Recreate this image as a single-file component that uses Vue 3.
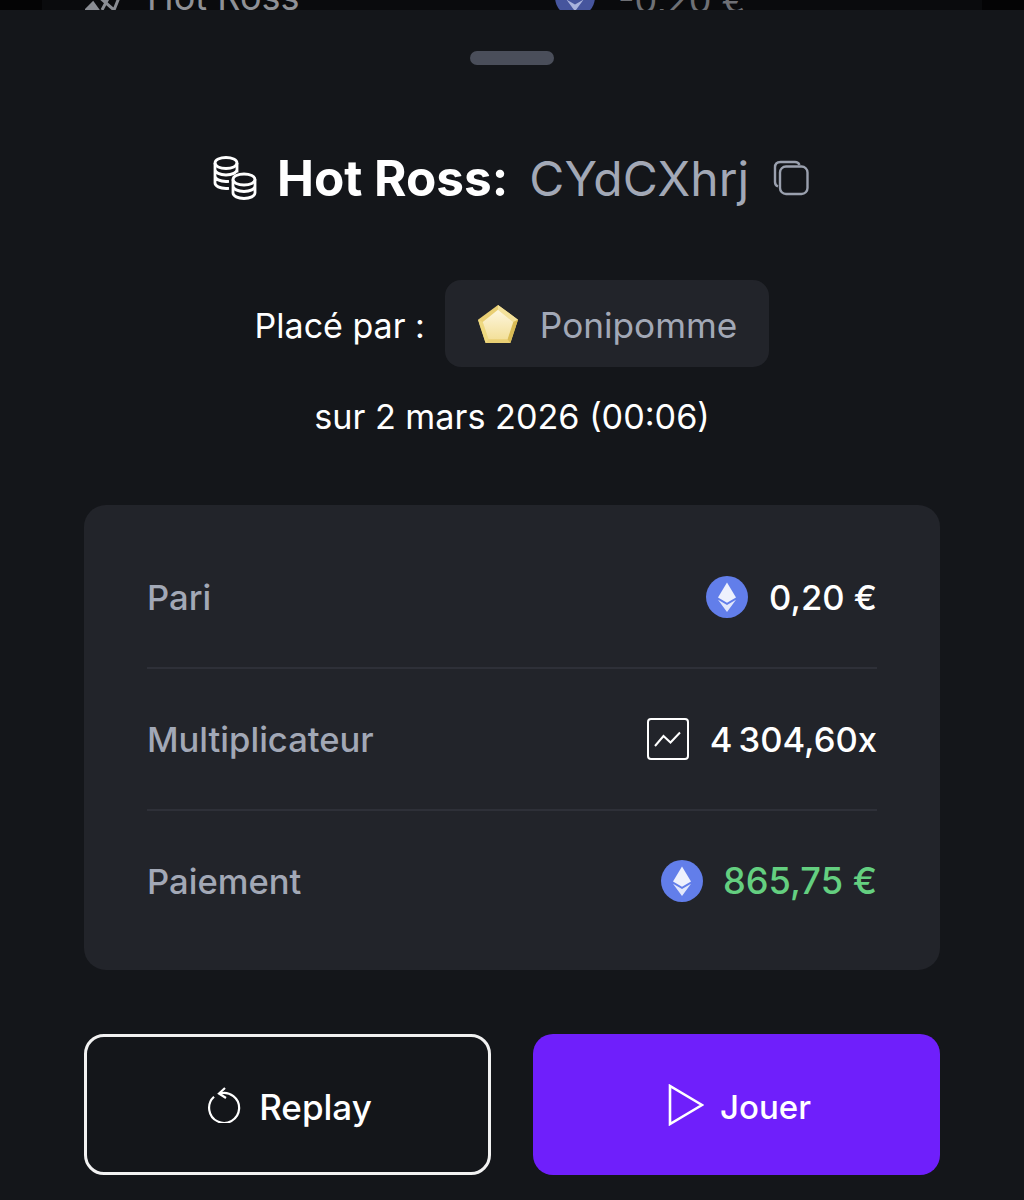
<script setup>
const rows = [
  { label: 'Pari', value: '0,20 €', icon: 'eth' },
  { label: 'Multiplicateur', value: '4\u202f304,60x', icon: 'chart' },
  { label: 'Paiement', value: '865,75 €', icon: 'eth', win: true }
]
</script>

<template>
  <div class="page">
    <div class="behind">
      <div class="behind-row">
        <div class="behind-name">
          <svg width="38" height="40" viewBox="0 0 38 40" fill="none" stroke="#8a8d93" stroke-width="3">
            <path d="M1 33h12l-5-7z" fill="#8a8d93" />
            <path d="M13 19l16 14 6-15M25 18l-8 15" />
          </svg>
          <span>Hot Ross</span>
        </div>
        <div class="behind-amount">
          <svg width="40" height="40" viewBox="0 0 42 42">
            <circle cx="21" cy="21" r="21" fill="#46559d" />
            <path d="M12 23.700l9 12.300 9-12.300-9 5.300z" fill="#a9b3dc" />
          </svg>
          <span class="behind-value">-0,20 €</span>
        </div>
      </div>
    </div>

    <div class="sheet">
      <div class="handle"></div>

      <div class="title">
        <svg class="coins" width="44" height="44" viewBox="0 0 44 44" fill="none" stroke="#fff" stroke-width="2.800">
          <ellipse cx="13" cy="7" rx="11" ry="5.500" />
          <path d="M2 7v20c0 3 4.900 5.500 11 5.500 1 0 2-.1 3-.2M2 13.500c0 3 4.900 5.500 11 5.500s11-2.500 11-5.500M24 7v9.500M2 20c0 3 4.900 5.500 11 5.500 1 0 2-.1 3-.2" />
          <ellipse cx="31" cy="23.500" rx="11" ry="5.500" />
          <path d="M20 23.500V37c0 3 4.900 5.500 11 5.500S42 40 42 37V23.500M20 30c0 3 4.900 5.500 11 5.500S42 33 42 30" />
        </svg>
        <span class="game">Hot Ross:</span>
        <span class="bet-id">CYdCXhrj</span>
        <svg class="copy" width="38" height="38" viewBox="0 0 38 38" fill="none" stroke="#9aa0ae" stroke-width="2.400">
          <path d="M6 27.500c-2-.8-3-2.300-3-4.500V8.500C3 5 5 3 8.500 3H23c2.200 0 3.700 1 4.500 3" />
          <rect x="8" y="7.500" width="27.500" height="27.500" rx="6" />
        </svg>
      </div>

      <div class="placed">
        <span class="placed-label">Placé par :</span>
        <div class="player">
          <svg width="42" height="40" viewBox="0 0 44 42">
            <defs>
              <linearGradient id="gem" x1="0" y1="0" x2="0" y2="1">
                <stop offset="0" stop-color="#fdf6de" />
                <stop offset="1" stop-color="#f3e09a" />
              </linearGradient>
            </defs>
            <path d="M22 1L43 16.500 35 41H9L1 16.500z" fill="#e9cf74" />
            <path d="M22 1L43 16.500 38 19 22 6z" fill="#f3e19a" />
            <path d="M43 16.500L35 41 32 37 38 19z" fill="#d9bb55" />
            <path d="M1 16.500L9 41l3-4L6 19z" fill="#eed980" />
            <path d="M22 6L38 19 32 37H12L6 19z" fill="url(#gem)" />
          </svg>
          <span>Ponipomme</span>
        </div>
      </div>

      <div class="date">sur 2 mars 2026 (00:06)</div>

      <div class="card">
        <div v-for="row in rows" :key="row.label" class="row">
          <span class="row-label">{{ row.label }}</span>
          <div class="row-value" :class="{ win: row.win }">
            <svg v-if="row.icon == 'eth'" width="42" height="42" viewBox="0 0 42 42">
              <circle cx="21" cy="21" r="21" fill="#627eea" />
              <path d="M21 6.500l-9 15 9 5.300 9-5.300z" fill="#eef1fd" />
              <path d="M12 23.700l9 12.300 9-12.300-9 5.300z" fill="#e2e7fb" />
            </svg>
            <svg v-else width="42" height="42" viewBox="0 0 42 42" fill="none" stroke="#fff">
              <rect x="1" y="1" width="40" height="40" rx="3" stroke-width="2" />
              <path d="M8 28l8.500-10 7 6.500 9.500-10" stroke-width="2" />
            </svg>
            <span>{{ row.value }}</span>
          </div>
        </div>
      </div>

      <div class="actions">
        <button class="btn replay">
          <svg width="34" height="36" viewBox="0 0 34 36" fill="none" stroke="#fff" stroke-width="2.200">
            <path d="M12.500 6.600A15 15 0 1 1 7 9.800" />
            <path d="M18 1l-6 5.500 7 4.500" />
          </svg>
          <span>Replay</span>
        </button>
        <button class="btn play">
          <svg width="36" height="42" viewBox="0 0 36 42" fill="none" stroke="#fff" stroke-width="2.600">
            <path d="M2 2v38l32-19z" />
          </svg>
          <span>Jouer</span>
        </button>
      </div>
    </div>
  </div>
</template>

<style>
body {
  margin: 0;
  background: #14161a;
}
</style>

<style scoped>
.page {
  width: 1024px;
  height: 1200px;
  overflow: hidden;
  background: #14161a;
  font-family: Inter, "Liberation Sans", sans-serif;
  color: #fff;
}

.behind {
  height: 10px;
  overflow: hidden;
  background: #040405;
  padding: 0 42px;
}

.behind-row {
  display: flex;
  align-items: center;
  height: 40px;
  margin-top: -23px;
  padding: 0 43px;
  background: #0a0b0d;
  color: #8f9196;
  font-size: 36px;
}

.behind-name {
  display: flex;
  align-items: center;
  gap: 24px;
  width: 470px;
}

.behind-amount {
  display: flex;
  align-items: center;
  gap: 23px;
}

.behind-value {
  margin-top: 5px;
  color: #6e7075;
}

.sheet {
  height: 1190px;
  padding: 0 84px;
  box-sizing: border-box;
}

.handle {
  width: 84px;
  height: 14px;
  margin: 41px auto 0;
  border-radius: 7px;
  background: #4a4e5a;
}

.title {
  display: flex;
  align-items: center;
  justify-content: center;
  margin-top: 86px;
  height: 54px;
}

.coins {
  margin-right: 20px;
}

.game {
  font-size: 49.500px;
  font-weight: 700;
  margin-right: 21px;
}

.bet-id {
  font-size: 48px;
  color: #a2a8b6;
  margin-right: 24px;
}

.copy {
  transform: translateX(-1px);
}

.placed {
  display: flex;
  align-items: center;
  justify-content: center;
  gap: 20px;
  margin-top: 75px;
}

.placed-label {
  font-size: 34px;
  margin-top: 3px;
}

.player {
  display: flex;
  align-items: center;
  gap: 21px;
  height: 87px;
  padding: 0 32px;
  border-radius: 16px;
  background: #22242a;
  color: #a2a8b6;
  font-size: 35.200px;
}

.player span {
  margin-top: 3px;
}

.date {
  margin-top: 28px;
  text-align: center;
  font-size: 34.200px;
  line-height: 44px;
}

.card {
  margin-top: 66px;
  padding: 22px 63px 0;
  border-radius: 22px;
  background: #22242a;
  height: 465px;
  box-sizing: border-box;
}

.row {
  display: flex;
  align-items: center;
  justify-content: space-between;
  height: 140px;
  border-bottom: 2px solid #2e3038;
}

.row:last-child {
  border-bottom: none;
}

.row-label {
  font-size: 34.600px;
  font-weight: 500;
  color: #a2a8b6;
}

.row-value {
  display: flex;
  align-items: center;
  gap: 21px;
  font-size: 34.600px;
  font-weight: 500;
}

.win {
  gap: 20px;
  color: #64cf80;
  font-size: 36.200px;
}

.actions {
  display: grid;
  grid-template-columns: 1fr 1fr;
  gap: 42px;
  margin-top: 64px;
}

.btn {
  display: flex;
  align-items: center;
  justify-content: center;
  gap: 18px;
  height: 141px;
  padding: 0 0 0 4px;
  border-radius: 20px;
  font-family: inherit;
  font-size: 35px;
  font-weight: 500;
  color: #fff;
}

.btn span {
  margin-top: 4px;
}

.replay {
  background: #14161a;
  border: 3px solid #f2f2f2;
}

.play {
  gap: 16px;
  padding-left: 6px;
  background: #6f1ffb;
  border: none;
  font-size: 33px;
}
</style>
